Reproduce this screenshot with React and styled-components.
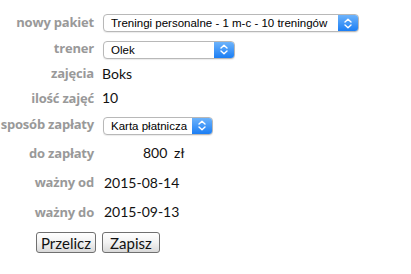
import React from "react";
import styled, { createGlobalStyle } from "styled-components";

const GlobalStyle = createGlobalStyle`
  body {
    margin: 0;
    background: #fff;
    font-family: Lato, "Open Sans", sans-serif;
  }
`;

const Form = styled.div`
  padding-top: 8px;
  width: 411px;
`;

const Row = styled.div`
  display: grid;
  grid-template-columns: 94px 1fr;
  column-gap: 8px;
  align-items: center;
  height: ${(p) => p.$h}px;
`;

const Label = styled.div`
  text-align: right;
  white-space: nowrap;
  font-family: "Open Sans", Lato, sans-serif;
  font-weight: bold;
  font-size: 13px;
  letter-spacing: -0.2px;
  color: #999;
`;

const Value = styled.div`
  font-size: 14px;
  color: #111;
  padding-left: ${(p) => p.$pad || 0}px;
  word-spacing: ${(p) => p.$ws || 0}px;
`;

const SelectBox = styled.div`
  display: inline-flex;
  align-items: stretch;
  width: ${(p) => p.$w}px;
  height: 18px;
  margin-left: 1px;
  box-sizing: border-box;
  border: 1px solid #b8b8b8;
  border-radius: 4px;
  background: #fff;
  overflow: hidden;
  box-shadow: 0 1px 1px rgba(0, 0, 0, 0.08);
`;

const SelectText = styled.span`
  flex: 1;
  padding-left: 7px;
  font-family: "Liberation Sans", Arial, sans-serif;
  font-size: 11.5px;
  line-height: 16px;
  color: #000;
  white-space: nowrap;
  overflow: hidden;
`;

const SelectArrow = styled.span`
  width: 20px;
  display: flex;
  align-items: center;
  justify-content: center;
  background: linear-gradient(#6db3fb, #1b7ef4);
`;

const Buttons = styled.div`
  display: flex;
  gap: 6px;
  padding: 6px 0 0 36px;
`;

const Button = styled.button`
  min-width: 58px;
  height: 21px;
  padding: 0 4px;
  border: 1px solid #707070;
  border-radius: 3px;
  background: linear-gradient(#ffffff, #f2f2f2 50%, #d9d9d9);
  font-family: Lato, "Open Sans", sans-serif;
  font-size: 15px;
  color: #111;
  line-height: 18px;
`;

const Chevrons = () => (
  <svg width="8" height="11" viewBox="0 0 8 11" fill="none">
    <path d="M1 4 L4 1.2 L7 4" stroke="#fff" strokeWidth="1.4" strokeLinecap="round" strokeLinejoin="round" />
    <path d="M1 7 L4 9.8 L7 7" stroke="#fff" strokeWidth="1.4" strokeLinecap="round" strokeLinejoin="round" />
  </svg>
);

const Select = ({ width, children }) => (
  <SelectBox $w={width}>
    <SelectText>{children}</SelectText>
    <SelectArrow>
      <Chevrons />
    </SelectArrow>
  </SelectBox>
);

export default function App() {
  return (
    <>
      <GlobalStyle />
      <Form>
        <Row $h={27}>
          <Label>nowy pakiet</Label>
          <div>
            <Select width={256}>Treningi personalne - 1 m-c - 10 treningów</Select>
          </div>
        </Row>
        <Row $h={26}>
          <Label>trener</Label>
          <div>
            <Select width={132}>Olek</Select>
          </div>
        </Row>
        <Row $h={24}>
          <Label>zajęcia</Label>
          <Value>Boks</Value>
        </Row>
        <Row $h={25}>
          <Label>ilość zajęć</Label>
          <Value>10</Value>
        </Row>
        <Row $h={28}>
          <Label>sposób zapłaty</Label>
          <div>
            <Select width={110}>Karta płatnicza</Select>
          </div>
        </Row>
        <Row $h={29}>
          <Label>do zapłaty</Label>
          <Value $pad={41} $ws={3}>800 zł</Value>
        </Row>
        <Row $h={30}>
          <Label>ważny od</Label>
          <Value $pad={2}>2015-08-14</Value>
        </Row>
        <Row $h={29}>
          <Label>ważny do</Label>
          <Value $pad={2}>2015-09-13</Value>
        </Row>
        <Buttons>
          <Button>Przelicz</Button>
          <Button>Zapisz</Button>
        </Buttons>
      </Form>
    </>
  );
}
